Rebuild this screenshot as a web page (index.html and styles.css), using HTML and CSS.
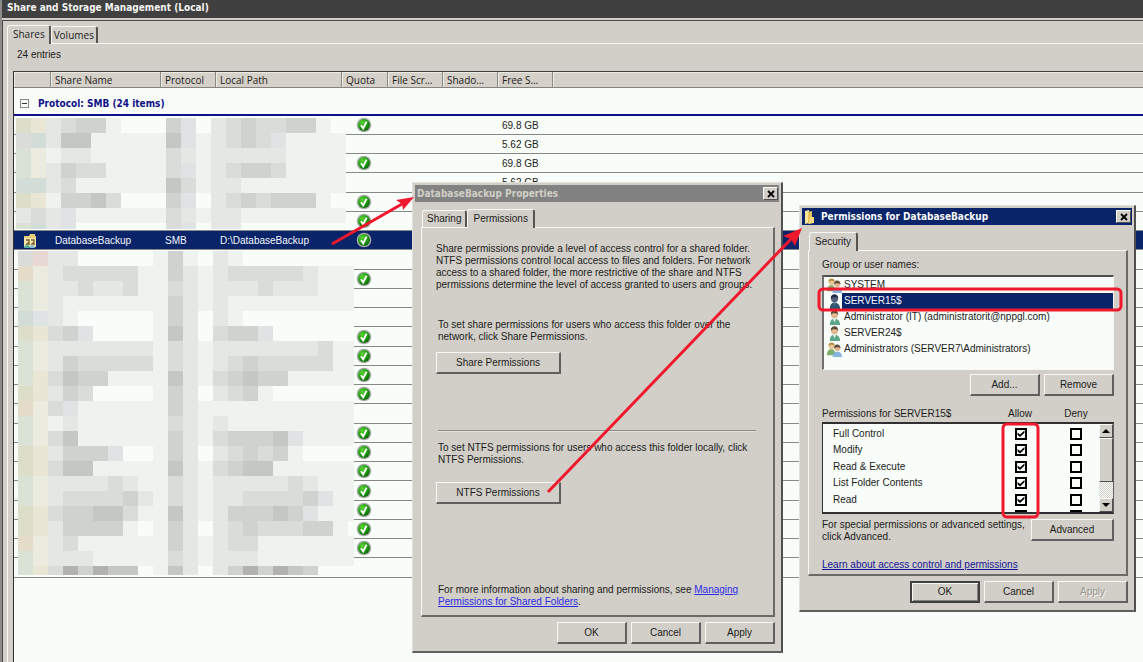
FILE: index.html
```html
<!DOCTYPE html>
<html lang="en">
<head>
    <meta charset="UTF-8">
    <meta name="viewport" content="width=device-width, initial-scale=1.0">
    <title>Share and Storage Management</title>
    <link rel="stylesheet" href="styles.css">
</head>
<body>
<!-- shared icons -->
<svg class="defs" width="0" height="0">
    <defs>
        <radialGradient id="green" cx="35%" cy="30%" r="75%">
            <stop offset="0" stop-color="#5fd23a"/>
            <stop offset="0.5" stop-color="#22a50f"/>
            <stop offset="1" stop-color="#0b6a06"/>
        </radialGradient>
        <symbol id="ok" viewBox="0 0 16 16">
            <circle cx="8" cy="8" r="7.3" fill="#a9a9ab"/>
            <circle cx="8" cy="8" r="5.9" fill="url(#green)"/>
            <path d="M5 8.2l2.2 3.2L10.6 4.6" fill="none" stroke="#fff" stroke-width="1.9"/>
        </symbol>
        <symbol id="close" viewBox="0 0 8 8">
            <path d="M1 1l6 6M7 1L1 7" stroke="#000" stroke-width="1.8"/>
        </symbol>
        <symbol id="user" viewBox="0 0 16 16">
            <path d="M3 16c0-5 2-6.500 5-7 3 .5 6 2 6 7z" fill="#5fa58c"/>
            <path d="M6 9l2 4 2-4z" fill="#e6f2ea"/>
            <circle cx="8" cy="5" r="3.800" fill="#e0b98c"/>
            <path d="M4 5c-.4-6 8-6.500 8 0-1.500-2-4-1.200-4.600-2.200C6.500 4 5 3.500 4 5z" fill="#5a4a38"/>
        </symbol>
        <symbol id="user-dark" viewBox="0 0 16 16">
            <path d="M3 16c0-5 2-6.500 5-7 3 .5 6 2 6 7z" fill="#2c5670"/>
            <path d="M6 9l2 4 2-4z" fill="#4f7088"/>
            <circle cx="8" cy="5" r="3.800" fill="#57607a"/>
            <path d="M4 5c-.4-6 8-6.500 8 0-1.500-2-4-1.200-4.600-2.200C6.500 4 5 3.500 4 5z" fill="#20284a"/>
        </symbol>
        <symbol id="users" viewBox="0 0 16 16">
            <path d="M0 14c0-5 2-6 4.500-6.500C7.500 8 9 10 9 14z" fill="#7fae6c"/>
            <circle cx="5" cy="4.300" r="3.300" fill="#e9c694"/>
            <path d="M1.500 4.500C1.200-1 8.300-.5 8.300 4 6.500 2.500 3 2.500 1.500 4.500z" fill="#b08c3e"/>
            <path d="M6 16c0-4 2-5.500 4.800-6 3 .5 5.200 2 5.200 6z" fill="#86b4dc"/>
            <circle cx="11" cy="6.500" r="3.200" fill="#deb488"/>
            <path d="M7.600 7c-.5-6 7-5.500 6.800 0-1.500-2-4.800-2-6.800 0z" fill="#5a4a38"/>
        </symbol>
        <symbol id="folder" viewBox="0 0 12 16">
            <path d="M1 2l4-1v13l-4 1z" fill="#f8e59c"/>
            <path d="M4 3l4-1v11l-4 2z" fill="#e3c35a"/>
            <path d="M6 8h4v6l-5 1z" fill="#f4da82"/>
        </symbol>
        <symbol id="share" viewBox="0 0 16 16">
            <path d="M2 3h5l1-2h5v2h1v11H2z" fill="#e8cc78"/>
            <path d="M2 5h12v9H2z" fill="#f8e6a8"/>
            <path d="M4 7h3v2L5 11h3M9 7h3v2l-2 2h3" fill="none" stroke="#7a6238" stroke-width="1.4"/>
            <path d="M2 15c0-2 1-3 3-3s3 1 3 3z" fill="#4fae9a"/>
            <path d="M8 15c0-2 1-3 2-3s3 1 3 3z" fill="#8abdd8"/>
        </symbol>
    </defs>
</svg>

<div class="console">
    <h1 class="console-title">Share and Storage Management (Local)</h1>

    <div class="console-body">
        <div class="tabs">
            <button class="tab active">Shares</button>
            <button class="tab">Volumes</button>
        </div>
        <div class="page">
            <p class="entries">24 entries</p>
            <div class="list">
                <table class="shares">
                    <colgroup>
                        <col class="c-icon"><col class="c-name"><col class="c-std"><col class="c-path">
                        <col class="c-quota"><col class="c-std"><col class="c-std"><col class="c-std"><col>
                    </colgroup>
                    <thead>
                    <tr>
                        <th></th><th>Share Name</th><th>Protocol</th><th>Local Path</th><th>Quota</th>
                        <th>File Scr…</th><th>Shado…</th><th>Free S…</th><th></th>
                    </tr>
                    </thead>
                    <tbody>
                    <tr class="group">
                        <td colspan="9"><span class="collapse"></span>Protocol: SMB (24 items)</td>
                    </tr>
                    </tbody>
                    <tbody id="rows"></tbody>
                </table>
                <svg class="mask mask-top" id="mask-top" viewBox="0 0 331 111"></svg>
                <svg class="mask mask-bottom" id="mask-bottom" viewBox="0 0 336 324"></svg>
            </div>
        </div>
    </div>
</div>

<!-- Properties window -->
<div class="window properties">
    <div class="titlebar inactive">
        <h2>DatabaseBackup Properties</h2>
        <button class="close" aria-label="Close"><svg width="8" height="8"><use href="#close"/></svg></button>
    </div>
    <div class="tabs">
        <button class="tab">Sharing</button>
        <button class="tab active">Permissions</button>
    </div>
    <div class="panel">
        <p class="intro">Share permissions provide a level of access control for a shared folder.<br>
            NTFS permissions control local access to files and folders. For network<br>
            access to a shared folder, the more restrictive of the share and NTFS<br>
            permissions determine the level of access granted to users and groups.</p>
        <p class="share-text">To set share permissions for users who access this folder over the<br>
            network, click Share Permissions.</p>
        <button class="btn wide">Share Permissions</button>
        <hr>
        <p class="ntfs-text">To set NTFS permissions for users who access this folder locally, click<br>
            NTFS Permissions.</p>
        <button class="btn wide">NTFS Permissions</button>
        <p class="more">For more information about sharing and permissions, see <a href="#">Managing<br>
            Permissions for Shared Folders</a>.</p>
    </div>
    <div class="actions">
        <button class="btn">OK</button>
        <button class="btn">Cancel</button>
        <button class="btn">Apply</button>
    </div>
</div>

<!-- Permissions window -->
<div class="window permissions">
    <div class="titlebar">
        <svg width="12" height="16"><use href="#folder"/></svg>
        <h2>Permissions for DatabaseBackup</h2>
        <button class="close" aria-label="Close"><svg width="8" height="8"><use href="#close"/></svg></button>
    </div>
    <div class="tabs">
        <button class="tab active">Security</button>
    </div>
    <div class="panel">
        <p>Group or user names:</p>
        <ul class="users">
            <li><svg width="15" height="15"><use href="#users"/></svg><span>SYSTEM</span></li>
            <li class="selected"><svg width="15" height="15"><use href="#user-dark"/></svg><span>SERVER15$</span></li>
            <li><svg width="15" height="15"><use href="#user"/></svg><span>Administrator (IT) (administratorit@nppgl.com)</span></li>
            <li><svg width="15" height="15"><use href="#user"/></svg><span>SERVER24$</span></li>
            <li><svg width="15" height="15"><use href="#users"/></svg><span>Administrators (SERVER7\Administrators)</span></li>
        </ul>
        <div class="user-actions">
            <button class="btn">Add...</button>
            <button class="btn">Remove</button>
        </div>
        <div class="perm-head">
            <span>Permissions for SERVER15$</span><span id="allow">Allow</span><span id="deny">Deny</span>
        </div>
        <div class="perm-box">
            <table class="perms">
                <tbody id="perms"></tbody>
            </table>
            <div class="scrollbar">
                <button class="up" aria-label="Scroll up"></button>
                <div class="thumb"></div>
                <button class="down" aria-label="Scroll down"></button>
            </div>
        </div>
        <div class="advanced">
            <p>For special permissions or advanced settings,<br>click Advanced.</p>
            <button class="btn">Advanced</button>
        </div>
        <a class="learn" href="#">Learn about access control and permissions</a>
    </div>
    <div class="actions">
        <button class="btn default">OK</button>
        <button class="btn">Cancel</button>
        <button class="btn" disabled>Apply</button>
    </div>
</div>

<!-- red markers over the windows -->
<svg class="marks" width="1143" height="662">
    <g fill="none" stroke="#f0182d" stroke-width="3">
        <path d="M332 244L402 204M548 492L791 239"/>
        <rect x="819" y="289" width="302" height="21" rx="4"/>
        <rect x="1003" y="424" width="35" height="93" rx="4"/>
    </g>
    <path d="M414 197l-11 13-1-6-6-4zM802 228l-7 18-4-7-8-3z" fill="#f0182d"/>
</svg>

<script src="script.js"></script>
</body>
</html>
```
FILE: styles.css
```css
* {
    margin: 0;
    padding: 0;
    box-sizing: border-box;
}

body {
    height: 100vh;
    overflow: hidden;
    position: relative;
    background: #d1cfc7;
    color: #1c1c1c;
    font-family: "Liberation Sans", Arial, sans-serif;
    font-size: 10px;
    line-height: 12px;
}

button {
    font: inherit;
    color: inherit;
    background: #d1cfc7;
    border: none;
}

.defs {
    position: absolute;
}

/* console */
.console {
    height: 100%;
    display: flex;
    flex-direction: column;
    border-left: 2px solid #8c8c8a;
}

.console-title {
    height: 18px;
    padding-left: 5px;
    background: #404040;
    color: #f4f4f0;
    font: bold 10px/16px "DejaVu Sans Condensed", "DejaVu Sans", sans-serif;
}

.console-body {
    flex: 1;
    display: flex;
    flex-direction: column;
    margin-top: 2px;
    padding: 4px 0 0 4px;
    border-top: 1px solid #484848;
    border-left: 1px solid #484848;
}

.tabs {
    display: flex;
    align-items: flex-end;
}

.tab {
    height: 17px;
    padding: 0 4px;
    border: 1px solid #f7f8f3;
    border-right: 2px solid #55554f;
    border-bottom: none;
    border-radius: 3px 3px 0 0;
}

.tab.active {
    height: 19px;
    padding: 0 5px;
    margin-bottom: -1px;
    position: relative;
}

.console .tab {
    font: 10px/14px "Open Sans", sans-serif;
    padding: 0 2px;
}

.console .tab.active {
    padding: 0 4px 2px 5px;
}

.page {
    flex: 1;
    display: flex;
    flex-direction: column;
    padding-left: 5px;
    border-top: 1px solid #f7f8f3;
    border-left: 1px solid #f7f8f3;
}

.entries {
    padding: 5px 0 0 4px;
    height: 27px;
}

.list {
    flex: 1;
    position: relative;
    background: #f8fdf9;
    border-top: 1px solid #404040;
    border-left: 1px solid #303030;
}

.shares {
    width: 100%;
    table-layout: fixed;
    border-spacing: 0;
}

.c-icon { width: 37px; }
.c-name { width: 110px; }
.c-std { width: 55px; }
.c-path { width: 126px; }
.c-quota { width: 46px; }

.shares th {
    height: 16px;
    padding-left: 4px;
    background: #d5d0c8;
    border-right: 1px solid #8a8a86;
    border-bottom: 1px solid #85837f;
    box-shadow: inset 1px 1px #ecebe5;
    font: 10px/14px "Open Sans", sans-serif;
    text-align: left;
    white-space: nowrap;
}

.shares th:last-child {
    border-right: none;
}

.shares td {
    height: 19px;
    padding: 1px 0 0 4px;
    border-bottom: 1px solid #868886;
    line-height: 14px;
    white-space: nowrap;
}

#rows tr:nth-child(4n) td {
    height: 20px;
}

.shares td svg {
    display: block;
}

.shares td.quota {
    padding: 0 0 0 14px;
}

.shares .group td {
    height: 28px;
    padding-top: 5px;
    border-bottom: 2px solid #101090;
    color: #101088;
    font: bold 10px/16px "DejaVu Sans Condensed", "DejaVu Sans", sans-serif;
}

.collapse {
    display: inline-block;
    width: 9px;
    height: 9px;
    margin: 0 9px 0 2px;
    border: 1px solid #8c8c8c;
    background: linear-gradient(#333, #333) center / 5px 1px no-repeat;
    vertical-align: -1px;
}

.shares .selected td {
    background: #0a246a;
    color: #f4f6fa;
}

.mask {
    position: absolute;
}

.mask-top {
    left: 2px;
    top: 46px;
    width: 331px;
    height: 111px;
}

.mask-bottom {
    left: 4px;
    top: 179px;
    width: 336px;
    height: 324px;
}

/* windows */
.window {
    position: absolute;
    display: flex;
    flex-direction: column;
    padding: 2px;
    background: #d1cfc7;
    border: 1px solid #e2e1da;
    border-right: 2px solid #505050;
    border-bottom: 2px solid #606060;
}

.properties {
    left: 412px;
    top: 182px;
    width: 371px;
    height: 471px;
}

.permissions {
    left: 799px;
    top: 205px;
    width: 337px;
    height: 407px;
}

.titlebar {
    display: flex;
    align-items: center;
    height: 17px;
    padding: 0 1px 0 2px;
    background: #0a246a;
    color: #f8f8f8;
}

.titlebar.inactive {
    background: #828282;
    color: #d1cfc7;
}

.titlebar h2 {
    flex: 1;
    font: bold 10px/16px "DejaVu Sans Condensed", "DejaVu Sans", sans-serif;
}

.permissions h2 {
    padding-left: 5px;
}

.close {
    display: flex;
    align-items: center;
    justify-content: center;
    width: 15px;
    height: 13px;
    border: 1px solid #f7f8f3;
    border-right-color: #505050;
    border-bottom-color: #505050;
}

.window .tabs {
    height: 25px;
    padding: 0 7px;
}

.panel {
    flex: 1;
    margin: 0 4px 0 6px;
    padding: 15px 14px 0;
    border: 1px solid #f7f8f3;
    border-right: 2px solid #6a6a66;
    border-bottom: 2px solid #6a6a66;
}

.btn {
    width: 70px;
    height: 22px;
    border: 1px solid #f7f8f3;
    border-right: 2px solid #606060;
    border-bottom: 2px solid #606060;
}

.btn.wide {
    display: block;
    width: 125px;
}

.btn.default {
    border: 2px solid #404040;
    box-shadow: inset 1px 1px #f7f8f3, inset -1px -1px #808080;
}

.btn:disabled {
    color: #96948e;
    text-shadow: 1px 1px #f7f8f3;
}

.actions {
    display: flex;
    justify-content: flex-end;
    gap: 4px;
    padding: 5px 4px 5px;
}

.properties p {
    padding-left: 2px;
}

.properties .intro {
    padding-left: 0;
}

.share-text {
    margin: 28px 0 9px;
}

hr {
    margin: 56px 3px 10px 2px;
    border: none;
    border-top: 1px solid #8a8a86;
    border-bottom: 1px solid #e2e1da;
}

.ntfs-text {
    margin-bottom: 16px;
}

.more {
    margin-top: 80px;
}

a {
    color: #2b2be8;
}

.permissions .panel {
    padding: 8px 12px 0 13px;
}

.users {
    height: 95px;
    margin: 4px 0;
    list-style: none;
    background: #f8fdf9;
    border: 1px solid #f7f8f3;
    border-top: 2px solid #505050;
    border-left: 2px solid #707070;
}

.users li {
    display: flex;
    align-items: center;
    height: 16px;
    padding-left: 3px;
}

.users span {
    flex: 1;
    padding-left: 2px;
    line-height: 16px;
}

.users .selected span {
    background: #0a246a;
    color: #f4f6fa;
}

.user-actions {
    display: flex;
    justify-content: flex-end;
    gap: 4px;
}

.perm-head {
    display: grid;
    grid-template-columns: 1fr 56px 56px 10px;
    margin: 12px 0 2px;
}

.perm-head span + span {
    text-align: center;
}

.perm-box {
    display: flex;
    align-items: stretch;
    height: 92px;
    overflow: hidden;
    background: #f8fdf9;
    border: 2px solid #303030;
    border-right: 1px solid #606060;
    border-left-width: 1px;
}

.perms {
    flex: 1;
    align-self: flex-start;
    table-layout: fixed;
    border-spacing: 0;
    margin-top: 1px;
}

.perms th {
    height: 17px;
    padding-left: 10px;
    font-weight: normal;
    text-align: left;
}

.perms tr:nth-child(even) th {
    height: 16px;
}

.perms td {
    width: 64px;
}

.perms input {
    appearance: none;
    display: block;
    width: 12px;
    height: 12px;
    margin: 0 auto;
    border: 2px solid #000;
}

.perms td:last-child {
    width: 46px;
}

.perms input:checked::before {
    content: "";
    display: block;
    width: 8px;
    height: 8px;
    background: #000;
    clip-path: polygon(7% 38%, 38% 62%, 93% 12%, 93% 42%, 38% 94%, 7% 68%);
}

.scrollbar {
    display: flex;
    flex-direction: column;
    width: 14px;
    background: repeating-conic-gradient(#d1cfc7 0 25%, #f8fdf9 0 50%) 0 0 / 2px 2px;
}

.scrollbar button,
.thumb {
    display: flex;
    align-items: center;
    justify-content: center;
    height: 14px;
    background: #d1cfc7;
    border: 1px solid #f7f8f3;
    border-right-color: #505050;
    border-bottom-color: #505050;
}

.scrollbar .thumb {
    height: 44px;
}

.up::before,
.down::before {
    content: "";
    border: 4px solid transparent;
    border-top: none;
    border-bottom-color: #000;
}

.down {
    margin-top: auto;
}

.down::before {
    border-top: 4px solid #000;
    border-bottom: none;
}

.advanced {
    display: flex;
    justify-content: space-between;
    margin: 5px 0 16px;
}

.advanced .btn {
    width: 83px;
}

.learn {
    color: #14149a;
}

.marks {
    position: absolute;
    left: 0;
    top: 0;
    pointer-events: none;
}
```
FILE: script.js
```js
// share list
const TOTAL = 24;
const QUOTA = [1, 3, 5, 6, 7, 9, 12, 13, 14, 15, 17, 18, 19, 20, 21, 22, 23];
const FREE = {1: '69.8 GB', 2: '5.62 GB', 3: '69.8 GB', 4: '5.62 GB'};

let html = '';
for (let i = 1; i <= TOTAL; i++) {
    const sel = i === 7;
    html += `<tr class="${sel ? 'selected' : ''}">
        <td class="${sel ? 'icon' : ''}">${sel ? '<svg width="24" height="16"><use href="#share"/></svg>' : ''}</td>
        <td>${sel ? 'DatabaseBackup' : ''}</td>
        <td>${sel ? 'SMB' : ''}</td>
        <td>${sel ? 'D:\\DatabaseBackup' : ''}</td>
        <td class="quota">${QUOTA.includes(i) ? '<svg width="16" height="16"><use href="#ok"/></svg>' : ''}</td>
        <td></td><td></td>
        <td>${FREE[i] || ''}</td>
        <td></td>
    </tr>`;
}
document.getElementById('rows').innerHTML = html;

// permission list, the last row only peeks in above the scroll edge
const perms = ['Full Control', 'Modify', 'Read & Execute', 'List Folder Contents', 'Read', ''];
document.getElementById('perms').innerHTML = perms.map((name, i) => `<tr>
    <th id="perm${i}" aria-label="${name ? name.replace('&', '&amp;') : 'Write'}">${name.replace('&', '&amp;')}</th>
    <td><input type="checkbox" aria-labelledby="perm${i} allow" checked></td>
    <td><input type="checkbox" aria-labelledby="perm${i} deny"></td>
</tr>`).join('');

// pixelated areas, one letter per 15px block
const COLORS = {
    '.': '#f8fdf9', a: '#eef3ef', b: '#e4e7e4', c: '#dadcda', d: '#d0d2d0', e: '#c5c7c5', f: '#b2b3b1',
    y: '#dcdec9', Y: '#e9e6d5', g: '#dae2d5', t: '#d3ddd7', n: '#ebebdf', r: '#e8d8d4', p: '#e4dcc9', u: '#dfe3e4'
};

const TOP = [
    'yYbcdda...du.bcdccdda.',
    'ctbeeaaaaaeuabcdcuaaaa',
    'gnabbaaaaacbabbbbbaaaa',
    'gnbdccaaaacuabcddcaaaa',
    'ttbcaaaaaaecabbaaaaaaa',
    'yYaddec...du.bcdcddda.',
    'bcbuaaaaaacbabbaaaaaaa',
    'gtbu......cu.bb.......'
];

const BOTTOM = [
    'crbb.....ada.ba........',
    'pnbcccccaadbabcccccbaaa',
    'gnbbcbbcaacbabbbcbbbaaa',
    'gnbaaaaaaadbabaaaaaaaaa',
    'tuba.....adb.ba........',
    'yYcdu....aeb.cddu......',
    'gnbbbbbbbacbabbbbbbbcaa',
    'gnbdcccccacbabcdcccccaa',
    'gYceddaaaaebacdeddaaaaa',
    'yYbdc....adb.bcda......',
    'pncuaaaaaadbaaaaaaaaaaa',
    'gnabaaaaaacbabaaaaaaaaa',
    'gnceaaaaaadbacdddeuaaaa',
    'yYbdddu..adb.bcdcda....',
    'yYceeaaaaaebacdeeaaaaaa',
    'gnbbbbcbaacbabbbbbcbaaa',
    'gnbccccdbacbabbccccduaa',
    'yYcddeecaaebabdddeduaaa',
    'yYbdddda.adb.bcdcccdda.',
    'pnbcaaaaaadbabccaaaaaaa',
    'gnbbbaaaaacbabbbaaaaaaa',
    'gYcfdfee.aeb.bdfdfed...'
];

function drawMask(id, rows) {
    document.getElementById(id).innerHTML = rows.map((row, y) =>
        [...row].map((c, x) =>
            `<rect x="${x * 15}" y="${y * 15}" width="15" height="15" fill="${COLORS[c]}"/>`
        ).join('')
    ).join('');
}

drawMask('mask-top', TOP);
drawMask('mask-bottom', BOTTOM);
```
